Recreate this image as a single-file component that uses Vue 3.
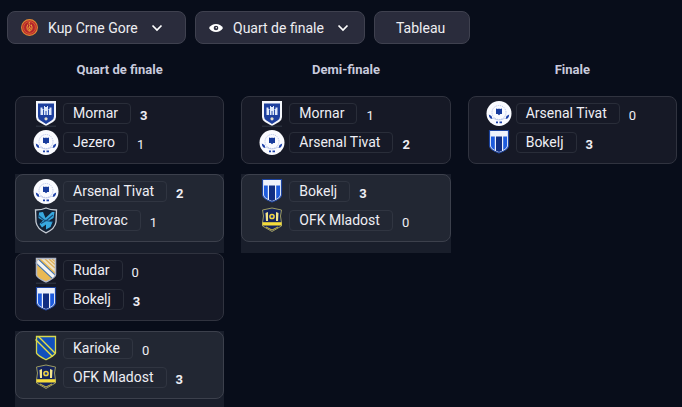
<script setup>
import { ref } from 'vue'

const round = ref('Quart de finale')
const cup = ref('Kup Crne Gore')

const team = (name, crest, score, won = false) => ({ name, crest, score, won })

const rounds = [
  {
    title: 'Quart de finale',
    matches: [
      [team('Mornar', 'mornar', 3, true), team('Jezero', 'round', 1)],
      [team('Arsenal Tivat', 'round', 2, true), team('Petrovac', 'petrovac', 1)],
      [team('Rudar', 'rudar', 0), team('Bokelj', 'bokelj', 3, true)],
      [team('Karioke', 'karioke', 0), team('OFK Mladost', 'mladost', 3, true)],
    ],
  },
  {
    title: 'Demi-finale',
    matches: [
      [team('Mornar', 'mornar', 1), team('Arsenal Tivat', 'round', 2, true)],
      [team('Bokelj', 'bokelj', 3, true), team('OFK Mladost', 'mladost', 0)],
    ],
  },
  {
    title: 'Finale',
    matches: [[team('Arsenal Tivat', 'round', 0), team('Bokelj', 'bokelj', 3, true)]],
  },
]
</script>

<template>
  <main class="page">
    <nav class="toolbar">
      <label class="control cup-control">
        <svg class="cup-icon" viewBox="0 0 17 17" aria-hidden="true">
          <circle cx="8.500" cy="8.500" r="7.900" fill="#c0272d" stroke="#dc8a35" stroke-width="1.100" />
          <circle cx="8.500" cy="8.500" r="5.900" fill="#b3232b" stroke="#d9772f" stroke-width=".7" />
          <path d="M8.500 3 Q7.600 4.500 8.500 5.500 Q9.600 6.500 8.500 7.500 M6.800 5.500 Q5.300 8 6.300 10.500 Q8.500 14 10.700 10.500 Q11.700 8 10.200 5.500 M8.500 7.500 Q6.900 9.500 8.500 11.500 Q10.100 9.500 8.500 7.500" fill="none" stroke="#eda63a" stroke-width="1" />
        </svg>
        <select v-model="cup" class="select" aria-label="Kup Crne Gore">
          <option>Kup Crne Gore</option>
        </select>
        <svg class="chevron" viewBox="0 0 12 8" aria-hidden="true">
          <path d="M1.500 1.500 L6 6 L10.500 1.500" />
        </svg>
      </label>
      <label class="control round-control">
        <svg class="eye-icon" viewBox="0 0 14 8" aria-hidden="true">
          <path d="M0 4 C3 -1.200 11 -1.200 14 4 C11 9.200 3 9.200 0 4 Z" fill="#fff" />
          <circle cx="7" cy="4" r="2.300" fill="#2a2c3c" />
          <circle cx="7.300" cy="3.700" r=".8" fill="#fff" />
        </svg>
        <select v-model="round" class="select" aria-label="Quart de finale">
          <option v-for="r in rounds" :key="r.title">{{ r.title }}</option>
        </select>
        <svg class="chevron" viewBox="0 0 12 8" aria-hidden="true">
          <path d="M1.500 1.500 L6 6 L10.500 1.500" />
        </svg>
      </label>
      <button type="button" class="control table-button">Tableau</button>
    </nav>

    <div class="bracket">
      <section v-for="r in rounds" :key="r.title" class="round">
        <h2 class="title">{{ r.title }}</h2>
        <div v-for="(match, i) in r.matches" :key="i" class="slot">
          <article class="match">
            <div v-for="t in match" :key="t.name" class="team">
              <svg class="crest" viewBox="0 0 26 27" aria-hidden="true">
                <g v-if="t.crest === 'mornar'">
                  <path d="M3 1 H23 V17 Q23 20 20 22 L13 26 L6 22 Q3 20 3 17 Z" fill="#f4f6fb" />
                  <path d="M5 3.500 H21 V16.500 Q21 19 18.500 20.500 L13 24 L7.500 20.500 Q5 19 5 16.500 Z" fill="#1d3f9e" />
                  <path d="M7.500 15 V7.500 H9.500 V9 H11 V6 H12 V7 H14 V6 H15 V9 H16.500 V7.500 H18.500 V15 Z" fill="#dfe8fa" />
                  <path d="M10.500 9.500 V15 M15.500 9.500 V15 M13 11 V15" stroke="#2b50ad" stroke-width="1" />
                  <circle cx="13" cy="18.800" r="1.600" fill="#e6dfca" />
                  <path d="M3 26.200 H23" stroke="#343b48" stroke-width="1" />
                </g>
                <g v-else-if="t.crest === 'round'">
                  <circle cx="13" cy="13.500" r="12.500" fill="#fafbff" />
                  <circle cx="13" cy="12.500" r="7" fill="none" stroke="#a9b8e3" stroke-width=".9" stroke-dasharray="1 1" />
                  <path d="M10 8.500 L12 9 L13 8.500 L14 9 L16 8.500 L16 11 L16 14 L14.300 14 L13 15.300 L11.700 14 L10 14 L10 11 Z" fill="#173b9c" />
                  <path d="M2.800 14.500 L5.500 16 L6.500 19 L4.500 18.500 Q2.800 17 2.800 14.500 M23.200 14.500 L20.500 16 L19.500 19 L21.500 18.500 Q23.200 17 23.200 14.500" fill="#1b3fa8" />
                  <path d="M10 22.300 H12 M13.500 22.300 H16" stroke="#1b3fa8" stroke-width="1.800" />
                  <path d="M7 18 Q13 22 19 18" fill="none" stroke="#b8c4e6" stroke-width=".8" />
                </g>
                <g v-else-if="t.crest === 'petrovac'">
                  <path d="M13 1 Q17 3 23.500 3 L23 15 Q22 22 13 25.800 Q4 22 3 15 L2.500 3 Q9 3 13 1 Z" fill="#132236" stroke="#c6ccd4" stroke-width="1.300" />
                  <path d="M6 5.500 L10 5 L12.500 11 L19 5 L21.500 5 L20.500 11 L16 13.500 L19.500 15 L17.500 20 L13 22.500 L13 17.500 L9 20.500 L6.500 17 L10 13.500 L5.500 11 Z" fill="#38a9df" />
                  <path d="M5.500 8.500 L11 13 L20 15 M20 8 L14 13 L8 16.500" fill="none" stroke="#174b78" stroke-width="1.100" />
                </g>
                <g v-else-if="t.crest === 'rudar'">
                  <path d="M3.500 1.500 H22.500 V18 Q22 21 13 25 Q4 21 3.500 18 Z" fill="#e9b954" />
                  <path d="M8 2 H22 V15 Z" fill="#f1e3c5" />
                  <path d="M12 2 L22 11 M16 2 L22 7.500 M19 2 L22 4.500" stroke="#dfb15a" stroke-width="1.300" />
                  <path d="M4 4 L21 20" stroke="#3970b7" stroke-width="5.500" />
                  <path d="M4 4 L21 20" stroke="#f5f5f3" stroke-width="3.500" />
                  <path d="M3.500 1.500 H22.500 V18 Q22 21 13 25 Q4 21 3.500 18 Z" fill="none" stroke="#aeb5c5" stroke-width="1.500" />
                  <path d="M3 26.200 H23" stroke="#343b48" stroke-width="1" />
                </g>
                <g v-else-if="t.crest === 'bokelj'">
                  <path d="M3.500 1.500 H22.500 V17 Q22 21 13 24 Q4 21 3.500 17 Z" fill="#eef2fb" stroke="#1c439f" stroke-width="1.200" />
                  <path d="M5 7.500 H8.800 V21 Q5 19 5 16.500 Z M17.200 7.500 H21 V16.500 Q21 19 17.200 21 Z" fill="#1d5bdd" />
                  <path d="M10 7.500 H16 V21.800 L13 23 L10 21.800 Z" fill="#102e82" />
                </g>
                <g v-else-if="t.crest === 'karioke'">
                  <path d="M3.500 1.500 H22.500 V18 Q22 20 13 24.800 Q4 20 3.500 18 Z" fill="#1150bd" />
                  <path d="M4 3 L21 20" stroke="#e9dc45" stroke-width="5.500" />
                  <path d="M4 3 L21 20" stroke="#1150a5" stroke-width="2.800" />
                  <path d="M3.500 1.500 H22.500 V18 Q22 20 13 24.800 Q4 20 3.500 18 Z" fill="none" stroke="#d7d84e" stroke-width="1.300" />
                </g>
                <g v-else>
                  <path d="M13 1 L22.500 3 L21.500 9 L22.500 16 V19 L13 24.500 L3.500 19 V16 L4.500 9 L3.500 3 Z" fill="#15245c" stroke="#9c9b60" stroke-width="1" />
                  <path d="M6.500 6 L9 5 V14 H7 Z M19.500 6 L17 5 V14 H19 Z" fill="#f3e48b" />
                  <circle cx="13" cy="9.500" r="2.100" fill="#17338e" stroke="#f2d33d" stroke-width="1.500" />
                  <path d="M3.500 15.200 H22.500 V18.500 H3.500 Z" fill="#f5dc3b" />
                  <path d="M7 20 L13 23 L19 20" fill="none" stroke="#d4bd3e" stroke-width="1" />
                </g>
              </svg>
              <a href="#" class="name">{{ t.name }}</a>
              <span class="score" :class="{ won: t.won }">{{ t.score }}</span>
            </div>
          </article>
        </div>
      </section>
    </div>
  </main>
</template>

<style>
html {
  background: #080d1a;
}
body {
  margin: 0;
}
</style>

<style scoped>
.page {
  color: #eeeef4;
  font-family: Roboto, "Liberation Sans", sans-serif;
}
.toolbar {
  display: flex;
  gap: 9px;
  padding: 11px 7px 0;
}
.control {
  display: flex;
  align-items: center;
  box-sizing: border-box;
  height: 33px;
  border: 1px solid #3f414f;
  border-radius: 8px;
  background: #2a2c3c;
  color: #eeeef2;
  font-family: inherit;
  font-size: 14px;
}
.cup-control {
  padding: 0 22px 0 13px;
}
.round-control {
  padding: 0 15px 0 13px;
}
.table-button {
  padding: 0 24px 0 21px;
}
.select {
  appearance: none;
  margin: 0 13px 0 10px;
  padding: 0;
  border: 0;
  background: transparent;
  color: inherit;
  font: inherit;
}
.cup-icon {
  width: 17px;
  height: 17px;
}
.eye-icon {
  width: 14px;
  height: 8px;
}
.chevron {
  width: 12px;
  height: 8px;
  fill: none;
  stroke: #fff;
  stroke-width: 1.7;
}
.bracket {
  display: grid;
  grid-template-columns: repeat(3, 1fr);
  gap: 17px;
  padding: 0 5px 0 15px;
}
.title {
  margin: 0;
  padding: 18px 0;
  color: #c8cadd;
  font-size: 13px;
  font-weight: 700;
  line-height: 16px;
  text-align: center;
}
.slot {
  padding-bottom: 10px;
}
.slot:nth-child(odd) {
  padding-bottom: 11px;
  background: #191e2b;
}
.match {
  padding: 2px 17px 6px;
  border: 1px solid #30333f;
  border-radius: 8px;
  background: #161926;
}
.slot:nth-child(odd) .match {
  border-color: #3c404c;
  background: #222733;
}
.team {
  display: flex;
  align-items: center;
  height: 29px;
}
.crest {
  width: 26px;
  height: 27px;
  margin-right: 4px;
}
.name {
  padding: 0 12px 0 9px;
  border: 1px solid #292d39;
  border-radius: 4px;
  color: inherit;
  font-size: 14px;
  line-height: 19px;
  text-decoration: none;
}
.slot:nth-child(odd) .name {
  border-color: #303541;
}
.score {
  padding: 4px 0 0 9px;
  font-size: 13px;
  line-height: 16px;
}
.won {
  font-weight: 700;
}
</style>
